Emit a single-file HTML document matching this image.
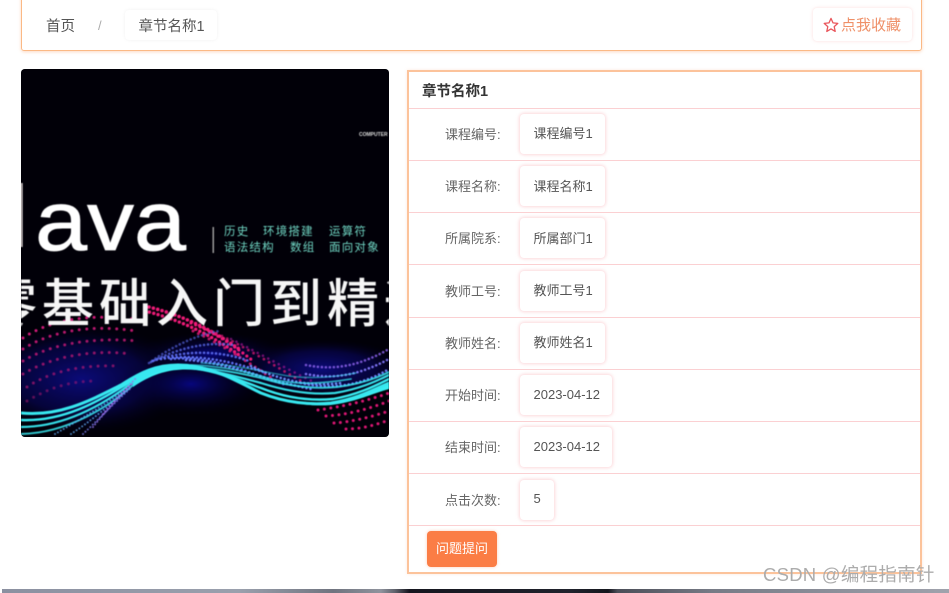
<!DOCTYPE html>
<html lang="zh-CN">
<head>
<meta charset="utf-8">
<title>章节名称1</title>
<style>
html,body{margin:0;padding:0;background:#fff;}
body{width:949px;height:593px;overflow:hidden;position:relative;font-family:"Liberation Sans","Noto Sans CJK SC",sans-serif;color:#555;}
#w{position:absolute;left:0;top:0;width:949px;height:593px;overflow:hidden;filter:blur(.35px);}
.abs{position:absolute;white-space:nowrap;}
.top{left:21px;top:-6px;width:899px;height:55px;border:1.5px solid #fbb985;border-radius:3px;box-shadow:0 1px 3px rgba(250,170,120,.45);}
.crumb{font-size:14.5px;line-height:20px;color:#555;}
.cchip{left:125px;top:10px;width:92px;height:30px;border-radius:4px;box-shadow:0 0 3px rgba(220,220,220,.4);}
.fav{left:813px;top:8px;width:99px;height:33px;border-radius:4px;background:#fff;box-shadow:0 0 3px rgba(250,190,190,.55);}
.favt{left:841px;top:16px;font-size:15px;line-height:20px;color:#ef9068;}
.img{left:21px;top:69px;width:368px;height:368px;border-radius:4px;overflow:hidden;background:#010008;}
.img svg{display:block;filter:blur(.5px);}
.panel{left:407px;top:70px;width:511px;height:500px;border:2px solid #fcc39b;box-shadow:0 0 3px rgba(250,190,160,.35);}
.line{left:409px;width:511px;height:1px;background:#fbd0d2;}
.title{left:422px;top:82px;font-size:14.5px;line-height:20px;font-weight:bold;color:#333;}
.lb{left:445px;font-size:13px;line-height:20px;color:#666;}
.chip{left:520px;height:40px;border-radius:4px;background:#fff;box-shadow:0 0 3px 1px rgba(250,190,195,.6);}
.val{left:533.5px;font-size:13px;line-height:20px;color:#555;}
.btn{left:427px;top:531px;width:70px;height:36px;border-radius:4px;background:#fb7d45;color:#fff;font-size:13px;line-height:36px;text-align:center;box-shadow:0 0 3px rgba(250,130,80,.4);}
.wm{left:763px;top:564px;font-size:18.5px;line-height:22px;color:#acacac;letter-spacing:.25px;}
.strip{left:2px;top:589px;width:947px;height:4px;background:linear-gradient(90deg,#8b90a0 0,#9aa0ad 25%,#70747f 35%,#8f939d 40%,#5f626c 41.5%,#15161f 43%,#20222c 60%,#14161d 64%,#4b4e58 65%,#777b86 75%,#a0a3ad 100%);}
</style>
</head>
<body>
<div id="w">
<div class="abs top"></div>
<div class="abs crumb" style="left:46px;top:17px;">首页</div>
<div class="abs" style="left:98px;top:18px;font-size:13px;line-height:16px;color:#aaa;">/</div>
<div class="abs cchip"></div>
<div class="abs crumb" style="left:138.5px;top:17px;">章节名称1</div>
<div class="abs fav"></div>
<svg class="abs" style="left:823px;top:17px;" width="16" height="16" viewBox="0 0 16 16"><path d="M8 1.4 L10 5.9 L14.8 6.4 L11.2 9.6 L12.2 14.4 L8 11.9 L3.8 14.4 L4.8 9.6 L1.2 6.4 L6 5.9 Z" fill="none" stroke="#e9565c" stroke-width="1.3" stroke-linejoin="round"/></svg>
<div class="abs favt">点我收藏</div>

<div class="abs img">
<svg width="368" height="368" viewBox="0 0 368 368" xmlns="http://www.w3.org/2000/svg">
<defs>
<radialGradient id="g1" cx="50%" cy="50%" r="50%"><stop offset="0" stop-color="#0b0b78"/><stop offset=".6" stop-color="#070550" stop-opacity=".7"/><stop offset="1" stop-color="#020018" stop-opacity="0"/></radialGradient>
<radialGradient id="g2" cx="50%" cy="50%" r="50%"><stop offset="0" stop-color="#07067c"/><stop offset="1" stop-color="#020018" stop-opacity="0"/></radialGradient>
</defs>
<rect width="368" height="368" fill="#010008"/>
<ellipse cx="60" cy="310" rx="110" ry="55" fill="url(#g1)"/>
<ellipse cx="170" cy="315" rx="75" ry="32" fill="url(#g2)"/>
<ellipse cx="300" cy="300" rx="90" ry="30" fill="url(#g1)"/>
<ellipse cx="190" cy="285" rx="80" ry="22" fill="url(#g2)"/>

<rect x="0" y="114" width="1.6" height="64" fill="#e6dcdc"/>
<text x="14" y="181" font-family="Liberation Sans,sans-serif" font-size="84" fill="#fff" stroke="#fff" stroke-width=".8" textLength="151" lengthAdjust="spacingAndGlyphs">ava</text>
<text x="338" y="67" font-family="Liberation Sans,sans-serif" font-size="5" font-weight="bold" fill="#ddd">COMPUTER</text>
<rect x="191.5" y="158" width="1.5" height="26" fill="#9a9a9a"/>
<g font-family="Liberation Sans,Noto Sans CJK SC,sans-serif" font-size="11.5" fill="#6fd4c2" letter-spacing="1.2">
<text x="203" y="166">历史</text><text x="242" y="166">环境搭建</text><text x="308" y="166">运算符</text>
<text x="203" y="182">语法结构</text><text x="269" y="182">数组</text><text x="308" y="182">面向对象</text>
</g>

<!-- pink dot cloud left -->
<g fill="none" stroke="#cc1a78" stroke-linecap="round" stroke-width="3" stroke-dasharray="0 7.5">
<path d="M2 269 C 30 250 70 245 112 250"/>
<path d="M2 280 C 30 262 70 255 115 262" opacity=".9"/>
<path d="M2 292 C 30 275 70 268 118 272" opacity=".8"/>
<path d="M2 305 C 30 288 70 280 110 285" opacity=".7"/>
<path d="M6 318 C 30 302 60 296 95 297" opacity=".6"/>
<path d="M6 332 C 30 318 50 312 75 312" opacity=".45"/>
</g>
<!-- pink arc -->
<g fill="none" stroke="#f01a78" stroke-linecap="round">
<path d="M128 238 C 160 246 190 260 218 280" stroke-width="3.6" stroke-dasharray="0 4.5"/>
<path d="M124 242 C 160 251 190 266 218 286" stroke-width="3.4" stroke-dasharray="0 4.5"/>
<path d="M170 254 C 195 264 215 278 232 292" stroke-width="3.2" stroke-dasharray="0 5"/>
<path d="M172 262 C 200 275 230 295 255 312" stroke-width="3" stroke-dasharray="0 6" opacity=".9" stroke="#d0186e"/>
<path d="M190 262 C 220 275 250 295 280 312" stroke-width="2.8" stroke-dasharray="0 6" opacity=".8" stroke="#d0186e"/>
<path d="M210 270 C 240 285 265 300 295 314" stroke-width="2.6" stroke-dasharray="0 6" opacity=".6" stroke="#b818a0"/>
</g>
<!-- pink lower right -->
<g fill="none" stroke="#dc1674" stroke-linecap="round" stroke-width="3" stroke-dasharray="0 6.5">
<path d="M297 341 C 320 338 345 332 368 324"/>
<path d="M305 347 C 325 346 348 340 368 332"/>
<path d="M313 354 C 330 353 350 348 368 342"/>
<path d="M325 360 C 340 360 355 356 368 351"/>
</g>
<!-- blue dot fan -->
<g fill="none" stroke="#5f70f4" stroke-linecap="round" stroke-width="2.6" stroke-dasharray="0 4">
<path d="M128 294 C 150 278 175 266 198 262" opacity=".6"/>
<path d="M130 293 C 155 280 185 272 212 276" opacity=".75"/>
<path d="M132 292 C 160 282 195 280 228 292" opacity=".9"/>
<path d="M140 290 C 170 285 205 290 245 304"/>
<path d="M150 290 C 185 286 225 302 265 316"/>
<path d="M165 291 C 200 292 240 310 290 320" stroke="#6a80f6"/>
<path d="M230 297 C 260 312 290 318 320 314" stroke="#6a90f6"/>
<path d="M285 296 C 315 302 340 296 368 280" stroke="#8a60e8" opacity=".85"/>
<path d="M285 305 C 315 311 340 305 368 290" stroke="#7a70f0"/>
<path d="M280 314 C 315 322 345 314 368 300" stroke="#6a80f4"/>
</g>
<!-- cyan band -->
<path d="M112 309 C 125 300 140 295 157 295 C 190 295 215 310 240 323 C 225 316 200 304 175 301 C 155 299 135 302 112 318 Z" fill="#3af0f4"/>
<path d="M240 323 C 265 334 290 336 310 334 C 335 330 350 322 368 314 L368 320 C 350 325 335 333 310 336 C 285 338 262 333 240 323 Z" fill="#3aeef2"/>
<!-- cyan wave lines -->
<g fill="none" stroke="#38e8f0" stroke-linecap="round">
<path d="M0 344 C 40 348 72 330 100 316 C 120 303 135 296 157 296 C 190 296 215 312 240 324 C 265 334 290 336 310 334 C 335 330 350 322 368 314" stroke-width="3"/>
<path d="M0 351 C 42 353 78 332 104 316 C 122 304 138 297 157 297.5 C 188 298 212 309 240 319 C 265 329 290 332 312 330 C 335 326 352 318 368 310" stroke-width="2.4"/>
<path d="M0 358 C 45 358 84 334 108 316 C 124 305 140 298 157 298.5 C 185 299 210 306 240 314 C 268 323 292 326 314 324 C 338 320 354 313 368 306" stroke-width="2.2" opacity=".95"/>
<path d="M0 365 C 48 364 90 336 112 316 C 126 305 142 298 160 298 C 185 298 210 302 240 309 C 270 318 295 320 316 318 C 340 315 356 309 368 303" stroke-width="2" opacity=".85"/>
<path d="M170 296 C 200 297 225 302 250 310 C 275 316 300 315 330 310" stroke-width="1.7" opacity=".7"/>
<path d="M180 294 C 205 295 230 300 256 305 C 280 310 305 310 335 304" stroke-width="1.5" opacity=".5"/>
</g>
<g fill="none" stroke="#5fa8f0" stroke-linecap="round" stroke-width="2" stroke-dasharray="0 3.4">
<path d="M34 365 C 60 350 90 332 108 318" opacity=".8"/>
<path d="M50 365 C 70 352 90 335 110 318" opacity=".8"/>
<path d="M62 365 C 76 352 92 335 111 318" stroke="#7a80f0" opacity=".8"/>
<path d="M72 358 C 80 348 92 334 112 314" stroke="#9070e8" opacity=".85"/>
<path d="M82 345 C 90 335 100 325 116 308" stroke="#a868e8" opacity=".75"/>
</g>

<text x="-36" y="253" font-family="Noto Sans CJK SC,sans-serif" font-size="52" font-weight="500" fill="#f6f6f6" letter-spacing="5">零基础入门到精通</text>
</svg>
</div>

<div class="abs panel"></div>
<div class="abs title">章节名称1</div>
<div class="abs line" style="top:108px;"></div>
<div class="abs line" style="top:160px;"></div>
<div class="abs line" style="top:212px;"></div>
<div class="abs line" style="top:264px;"></div>
<div class="abs line" style="top:317px;"></div>
<div class="abs line" style="top:369px;"></div>
<div class="abs line" style="top:421px;"></div>
<div class="abs line" style="top:473px;"></div>
<div class="abs line" style="top:525px;"></div>

<div class="abs lb" style="top:125px;">课程编号:</div>
<div class="abs chip" style="top:114px;width:85px;"></div>
<div class="abs val" style="top:124px;">课程编号1</div>

<div class="abs lb" style="top:177px;">课程名称:</div>
<div class="abs chip" style="top:166px;width:85px;"></div>
<div class="abs val" style="top:177px;">课程名称1</div>

<div class="abs lb" style="top:229px;">所属院系:</div>
<div class="abs chip" style="top:218px;width:85px;"></div>
<div class="abs val" style="top:229px;">所属部门1</div>

<div class="abs lb" style="top:282px;">教师工号:</div>
<div class="abs chip" style="top:271px;width:85px;"></div>
<div class="abs val" style="top:281px;">教师工号1</div>

<div class="abs lb" style="top:334px;">教师姓名:</div>
<div class="abs chip" style="top:323px;width:85px;"></div>
<div class="abs val" style="top:333px;">教师姓名1</div>

<div class="abs lb" style="top:386px;">开始时间:</div>
<div class="abs chip" style="top:375px;width:92px;"></div>
<div class="abs val" style="top:385px;">2023-04-12</div>

<div class="abs lb" style="top:438px;">结束时间:</div>
<div class="abs chip" style="top:427px;width:92px;"></div>
<div class="abs val" style="top:437px;">2023-04-12</div>

<div class="abs lb" style="top:491px;">点击次数:</div>
<div class="abs chip" style="top:480px;width:34px;"></div>
<div class="abs val" style="top:489px;">5</div>

<div class="abs btn">问题提问</div>

<div class="abs wm">CSDN @编程指南针</div>
<div class="abs strip"></div>
</div>
</body>
</html>
